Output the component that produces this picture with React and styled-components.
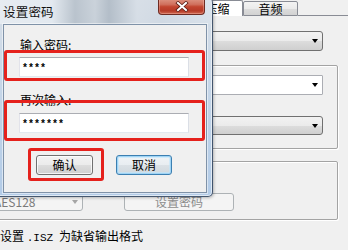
import React from "react";
import styled, { createGlobalStyle } from "styled-components";

const GlobalStyle = createGlobalStyle`
  html, body {
    margin: 0;
    padding: 0;
  }
  body {
    background: #f0f0f0;
    font-family: "Noto Sans CJK SC", "Noto Sans", sans-serif;
    font-size: 12px;
    color: #000;
  }
`;

const Screen = styled.div`
  position: relative;
  width: 348px;
  height: 250px;
  overflow: hidden;
  background: #f0f0f0;
`;

/* ---------- window behind the dialog ---------- */

const Backdrop = styled.div`
  display: flex;
  flex-direction: column;
  height: 100%;
`;

const TabBar = styled.div`
  display: flex;
  align-items: flex-end;
  height: 16px;
  padding-left: 192px;
`;

const Tab = styled.div`
  box-sizing: border-box;
  width: ${(p) => (p.$active ? 51 : 55)}px;
  height: ${(p) => (p.$active ? 16 : 15)}px;
  display: flex;
  align-items: center;
  justify-content: center;
  line-height: 14px;
  border: 1px solid #898c95;
  border-bottom: ${(p) => (p.$active ? "none" : "1px solid #898c95")};
  border-radius: 2px 2px 0 0;
  background: ${(p) =>
    p.$active
      ? "#fff"
      : "linear-gradient(#f3f3f3 0%, #ebebeb 50%, #dddddd 51%, #d2d2d2 100%)"};
`;

const TabFill = styled.div`
  flex: 1;
  height: 16px;
  box-sizing: border-box;
  border-bottom: 1px solid #898c95;
`;

const TabPage = styled.div`
  display: flex;
  flex-direction: column;
  align-items: flex-end;
  padding: 15px 10px 0 0;
`;

const comboBg = {
  gray: "linear-gradient(#f2f2f2 0%, #ebebeb 50%, #dddddd 51%, #cfcfcf 100%)",
  white: "#fff",
  disabled: "#f4f4f4",
};

const Combo = styled.div`
  box-sizing: border-box;
  width: ${(p) => p.$w}px;
  height: ${(p) => p.$h || 20}px;
  margin-right: ${(p) => p.$mr || 0}px;
  margin-top: ${(p) => p.$mt || 0}px;
  display: flex;
  align-items: center;
  padding: 0 4px 0 3px;
  border: 1px solid ${(p) => (p.$variant === "disabled" ? "#adb2b5" : p.$variant === "white" ? "#abadb3" : "#707070")};
  border-radius: ${(p) => (p.$variant === "white" ? 1 : 3)}px;
  background: ${(p) => comboBg[p.$variant]};
  color: ${(p) => (p.$variant === "disabled" ? "#7a7a7a" : "#000")};
  line-height: 14px;
  white-space: nowrap;
`;

const ComboText = styled.span`
  flex: 1;
  overflow: hidden;
`;

const Arrow = styled.span`
  width: 0;
  height: 0;
  border-left: 3.5px solid transparent;
  border-right: 3.5px solid transparent;
  border-top: 4px solid ${(p) => (p.$muted ? "#a6a6a6" : "#000")};
`;

const GroupBox = styled.div`
  box-sizing: border-box;
  width: ${(p) => p.$w}px;
  height: ${(p) => p.$h}px;
  margin-top: ${(p) => p.$mt}px;
  display: flex;
  flex-direction: column;
  align-items: ${(p) => p.$align || "flex-end"};
  padding: ${(p) => p.$pad};
  border: 1px solid #a3a3a3;
  border-radius: 2px;
  box-shadow: inset 1px 1px 0 #fff, 1px 1px 0 #fff;
`;

const Row = styled.div`
  display: flex;
  align-items: center;
`;

const DisabledButton = styled.div`
  box-sizing: border-box;
  width: 110px;
  height: 18px;
  margin-left: 41px;
  display: flex;
  align-items: center;
  justify-content: center;
  border: 1px solid #adb2b5;
  border-radius: 3px;
  background: #f4f4f4;
  color: #8d8d8d;
  line-height: 14px;
`;

const CheckLine = styled.div`
  margin-top: 9px;
  line-height: 14px;
  white-space: nowrap;
`;

const Ext = styled.span`
  margin: 0 6px 0 0;
  font-family: "Liberation Mono", monospace;
  font-size: 11px;
`;

/* ---------- the password dialog ---------- */

const Dialog = styled.div`
  position: absolute;
  left: -4px;
  top: -3px;
  width: 217px;
  height: 200px;
  box-sizing: border-box;
  display: flex;
  flex-direction: column;
  padding: 0 5px 3px 6px;
  border: 1px solid rgba(44, 62, 88, 0.85);
  border-radius: 6px 6px 5px 5px;
  background: linear-gradient(#dfe6ee 0%, #d2dce7 14%, #c0d3e8 60%, #b2cbe7 100%);
  box-shadow: inset 0 0 0 1px rgba(255, 255, 255, 0.6), 1px 1px 3px rgba(0, 0, 0, 0.25);
`;

const TitleBar = styled.div`
  display: flex;
  align-items: flex-start;
  height: 26px;
  margin: 0 -5px 0 -6px;
  padding: 0 5px 0 6px;
  background: linear-gradient(
    to right,
    rgba(232, 237, 242, 0.9) 0px,
    rgba(228, 234, 240, 0.9) 55px,
    rgba(178, 188, 198, 0.8) 78px,
    rgba(198, 206, 214, 0.8) 98px,
    rgba(170, 181, 192, 0.8) 112px,
    rgba(214, 221, 229, 0.8) 140px,
    rgba(205, 214, 224, 0.6) 165px,
    rgba(220, 228, 236, 0.6) 100%
  );
`;

const Title = styled.div`
  margin-top: 6px;
  line-height: 16px;
  font-size: 12.5px;
  letter-spacing: 0.2px;
  color: #111;
`;

const CloseButton = styled.div`
  box-sizing: border-box;
  width: 47px;
  height: 17px;
  margin-left: auto;
  margin-right: 2px;
  display: flex;
  align-items: center;
  justify-content: center;
  border: 1px solid #6e2b22;
  border-top: none;
  border-radius: 0 0 4px 4px;
  background: linear-gradient(#e09a88 0%, #d0705d 40%, #c2452f 55%, #b63b28 80%, #cf6a52 100%);
  box-shadow: inset 0 0 0 1px rgba(255, 200, 190, 0.35);
`;

const Client = styled.div`
  flex: 1;
  display: flex;
  flex-direction: column;
  align-items: flex-start;
  padding: 12px 0 0 15px;
  background: #f0f0f0;
  border: 1px solid #7f92a8;
  box-shadow: 0 0 0 1px rgba(255, 255, 255, 0.5);
`;

const Label = styled.div`
  margin: ${(p) => p.$mt}px 0 0 1px;
  line-height: 15px;
  white-space: nowrap;
`;

const Field = styled.div`
  box-sizing: border-box;
  width: 170px;
  height: 20px;
  margin-top: ${(p) => p.$mt}px;
  padding: 4px 0 0 2px;
  background: #fff;
  border: 1px solid #abadb3;
  border-left-color: #e2e3ea;
  border-right-color: #dbdfe6;
  border-bottom-color: #e3e9ef;
  font-family: "Liberation Mono", monospace;
  font-weight: bold;
  font-size: 10px;
  line-height: 14px;
`;

const ButtonRow = styled.div`
  display: flex;
  gap: 23px;
  margin: 22px 0 0 17px;
`;

const Button = styled.div`
  box-sizing: border-box;
  width: ${(p) => p.$w}px;
  height: 20px;
  display: flex;
  align-items: center;
  justify-content: center;
  line-height: 14px;
  border: 1px solid ${(p) => (p.$default ? "#3c7fb1" : "#707070")};
  border-radius: 3px;
  background: ${(p) =>
    p.$default
      ? "linear-gradient(#f0f3f6 0%, #e8edf1 50%, #dbe1e6 51%, #d0d8de 100%)"
      : "linear-gradient(#f2f2f2 0%, #ebebeb 50%, #dddddd 51%, #cfcfcf 100%)"};
  box-shadow: ${(p) =>
    p.$default
      ? "inset 0 0 0 1px #9fd4f5, inset 0 0 0 2px rgba(190, 230, 253, 0.6)"
      : "inset 0 0 0 1px rgba(255, 255, 255, 0.75)"};
`;

/* red annotation frames drawn over the screenshot */
const Mark = styled.div`
  position: absolute;
  box-sizing: border-box;
  border: 3px solid #e5211c;
  border-radius: 3px;
  pointer-events: none;
`;

function CloseGlyph() {
  return (
    <svg width="14" height="11" viewBox="0 0 14 11">
      <path d="M3 2 L11 9 M11 2 L3 9" stroke="#5a1d14" strokeWidth="3.6" strokeLinecap="square" />
      <path d="M3 2 L11 9 M11 2 L3 9" stroke="#fff" strokeWidth="2" strokeLinecap="square" />
    </svg>
  );
}

export default function App() {
  return (
    <>
      <GlobalStyle />
      <Screen>
        <Backdrop>
          <TabBar>
            <Tab $active>压缩</Tab>
            <Tab>音频</Tab>
            <TabFill />
          </TabBar>
          <TabPage>
            <Combo $variant="gray" $w={220} $mr={15}>
              <ComboText />
              <Arrow />
            </Combo>
            <GroupBox $w={243} $h={84} $mt={14} $pad="9px 14px 0 0">
              <Combo $variant="white" $w={220}>
                <ComboText />
                <Arrow />
              </Combo>
              <Combo $variant="gray" $w={220} $h={19} $mt={21}>
                <ComboText />
                <Arrow />
              </Combo>
            </GroupBox>
            <GroupBox $w={350} $h={59} $mt={12} $pad="31px 0 0 1px" $align="flex-start">
              <Row>
                <Combo $variant="disabled" $w={93} $h={18}>
                  <ComboText>AES128</ComboText>
                  <Arrow $muted />
                </Combo>
                <DisabledButton>设置密码</DisabledButton>
              </Row>
            </GroupBox>
          </TabPage>
          <CheckLine>
            设置 <Ext>.ISZ</Ext>为缺省输出格式
          </CheckLine>
        </Backdrop>

        <Dialog>
          <TitleBar>
            <Title>设置密码</Title>
            <CloseButton>
              <CloseGlyph />
            </CloseButton>
          </TitleBar>
          <Client>
            <Label $mt={0}>输入密码:</Label>
            <Field $mt={5}>****</Field>
            <Label $mt={15}>再次输入:</Label>
            <Field $mt={6}>*******</Field>
            <ButtonRow>
              <Button $w={57}>确认</Button>
              <Button $w={56} $default>
                取消
              </Button>
            </ButtonRow>
          </Client>
        </Dialog>

        <Mark style={{ left: 4, top: 50, width: 201, height: 31 }} />
        <Mark style={{ left: 4, top: 100, width: 201, height: 41 }} />
        <Mark style={{ left: 28, top: 148, width: 76, height: 33 }} />
      </Screen>
    </>
  );
}
